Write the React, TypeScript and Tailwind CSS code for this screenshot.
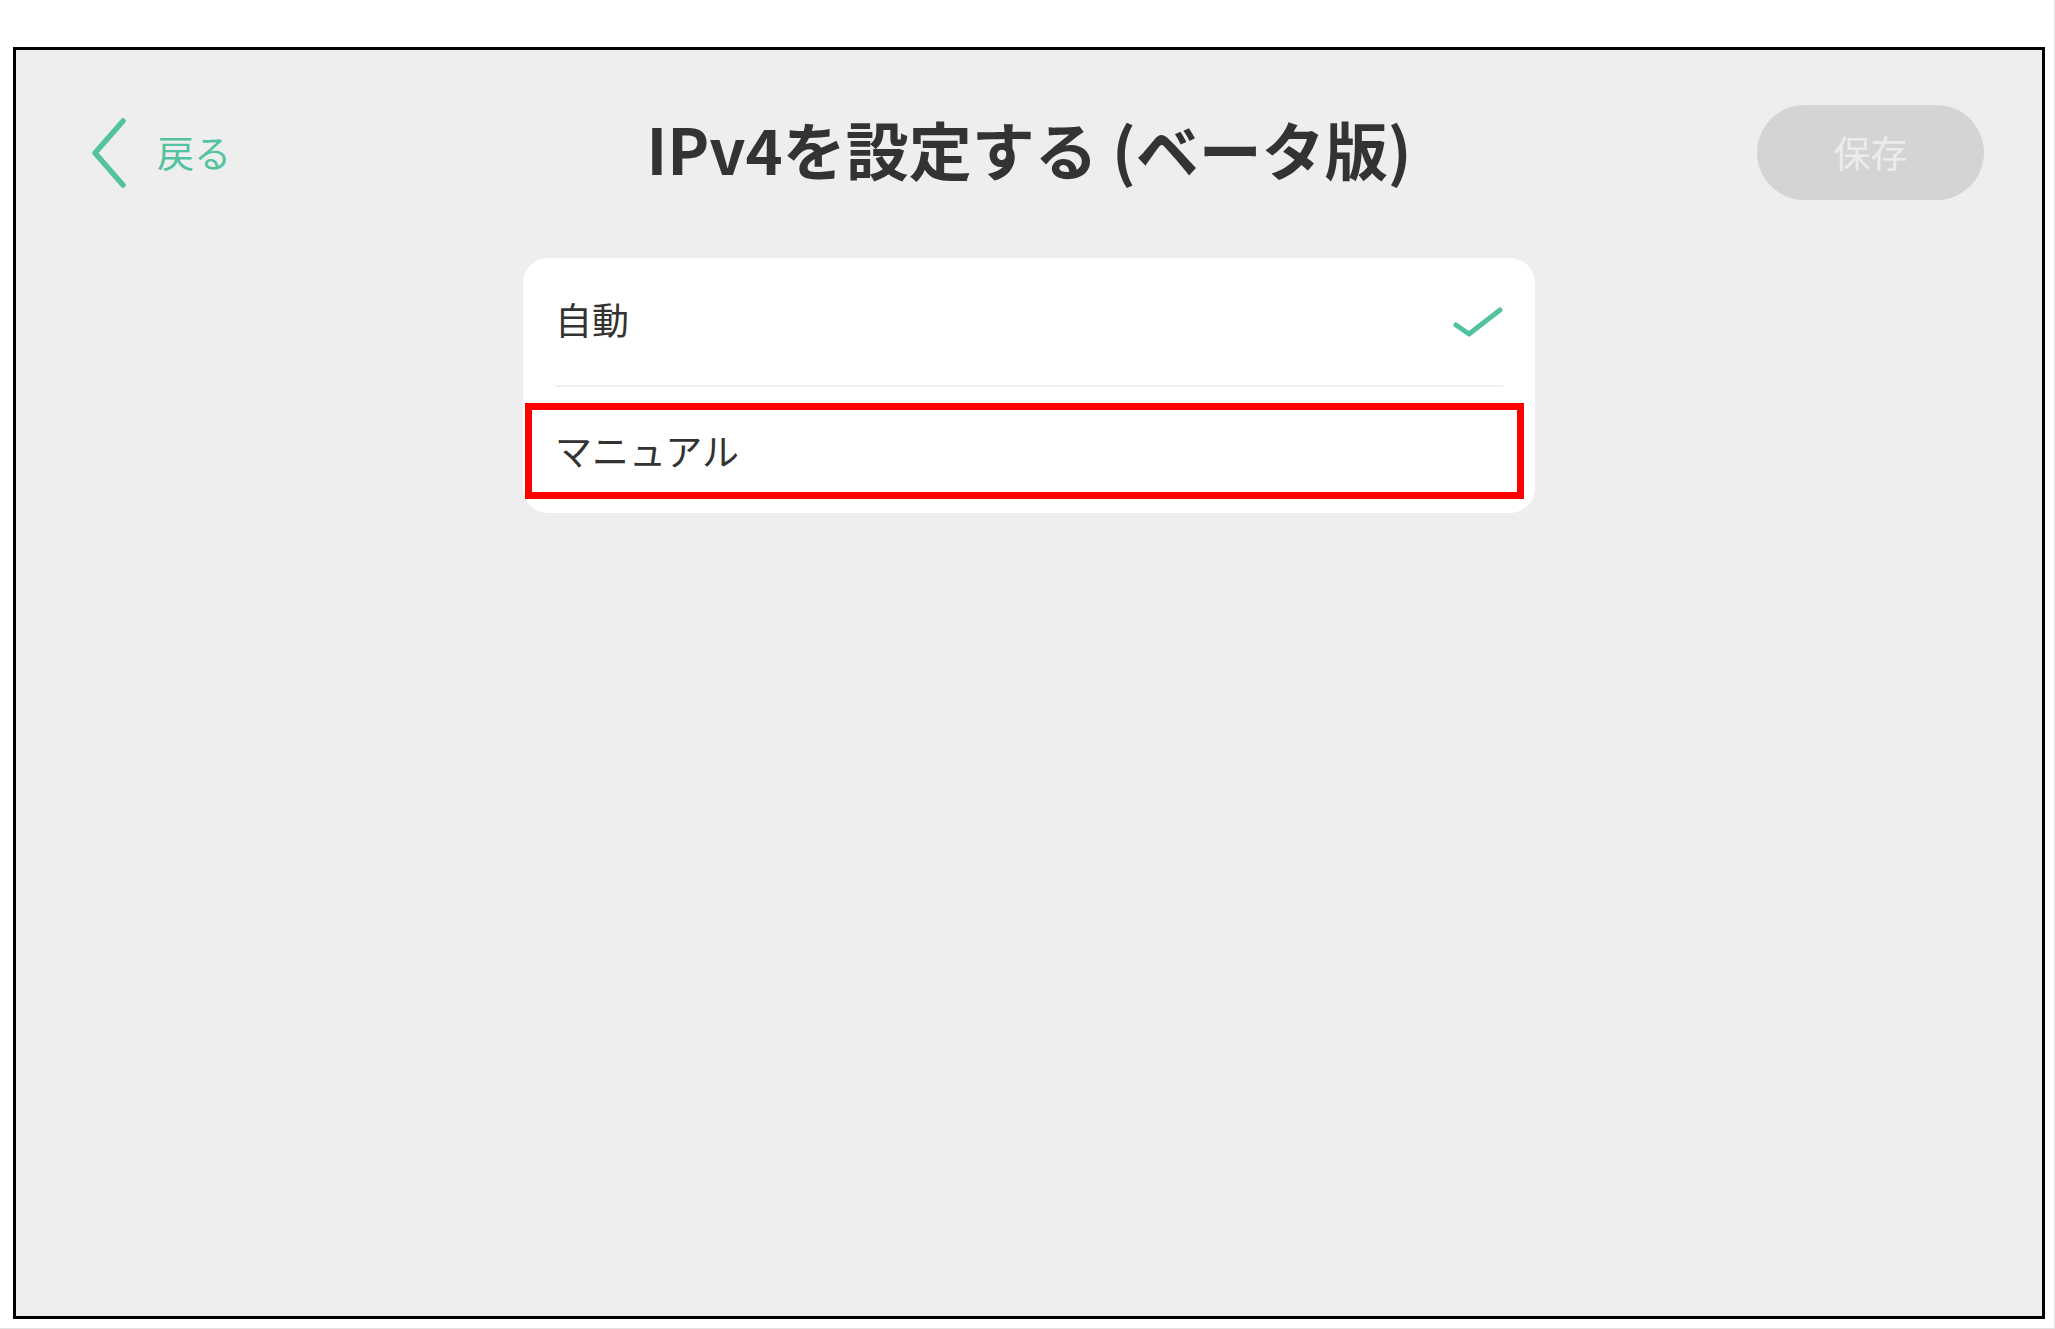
import React from "react";

const font = { fontFamily: '"Noto Sans CJK JP", "Noto Sans", sans-serif' };

function BackChevron() {
  return (
    <svg width="36" height="72" viewBox="0 0 36 72" fill="none">
      <polyline
        points="32,4 4,36 32,68"
        stroke="#52c2a0"
        strokeWidth="5.5"
        strokeLinecap="round"
        strokeLinejoin="round"
      />
    </svg>
  );
}

function CheckMark() {
  return (
    <svg width="52" height="32" viewBox="0 0 52 32" fill="none">
      <polyline
        points="4,19 17,28 48,4"
        stroke="#52c2a0"
        strokeWidth="5"
        strokeLinecap="round"
        strokeLinejoin="round"
      />
    </svg>
  );
}

export default function App() {
  return (
    <div
      className="w-[2055px] h-[1329px] bg-white border-b border-r border-[#e2e2e2] pt-[47px] pl-[13px]"
      style={font}
    >
      <div className="w-[2032px] h-[1272px] border-[3px] border-black bg-[#eeeeee]">
        {/* Header */}
        <div className="grid grid-cols-[1fr_auto_1fr] items-center h-[205px]">
          <div className="flex items-center pl-[75px]">
            <BackChevron />
            <span className="ml-[30px] text-[37px] leading-none text-[#52c2a0]">戻る</span>
          </div>
          <h1 className="mb-[10px] text-[63px] font-bold leading-none text-[#333333] whitespace-nowrap">
            IPv4を設定する (ベータ版)
          </h1>
          <div className="flex justify-end pr-[58px]">
            <button className="w-[227px] h-[95px] rounded-full bg-[#d4d4d4] text-[37px] leading-none text-[#ececec]">
              保存
            </button>
          </div>
        </div>

        {/* Options card */}
        <div className="mx-auto mt-[3px] w-[1012px] rounded-[25px] bg-white">
          <div className="flex items-center justify-between h-[127px] pl-[32px] pr-[31px]">
            <span className="mb-[4px] text-[37px] leading-none text-[#333333]">自動</span>
            <CheckMark />
          </div>
          <div className="mx-[32px] h-[2px] bg-[#f0f0f0]" />
          <div className="relative flex items-center h-[126px] pl-[32px]">
            <span className="text-[37px] leading-none text-[#333333]">マニュアル</span>
            <div className="absolute left-[2px] right-[11px] top-[16px] bottom-[14px] border-[7px] border-[#ff0000]" />
          </div>
        </div>
      </div>
    </div>
  );
}
